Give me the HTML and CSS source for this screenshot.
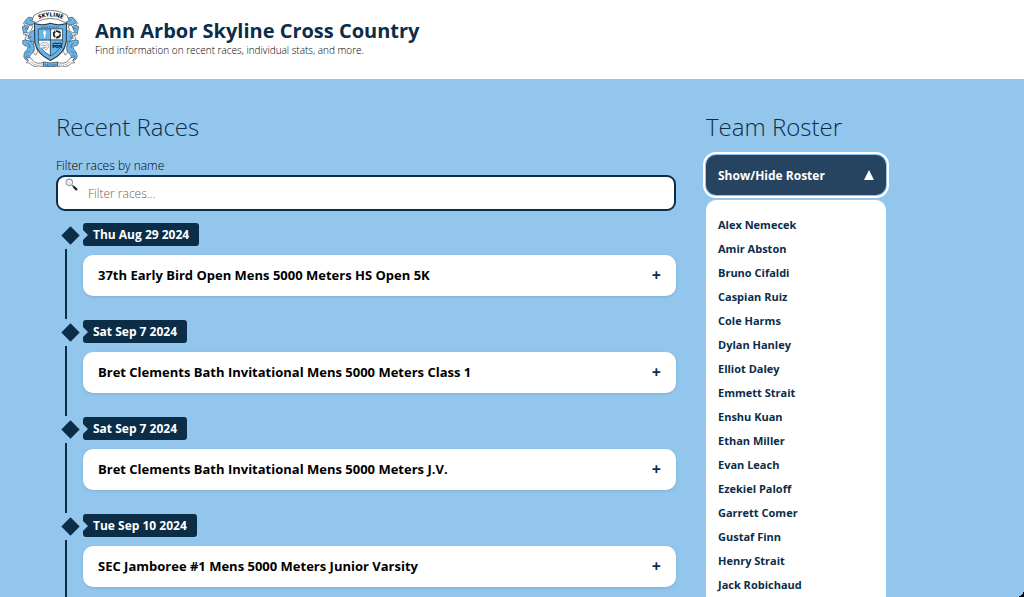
FILE: index.html
```html
<!DOCTYPE html>
<html lang="en">
<head>
    <meta charset="UTF-8">
    <meta name="viewport" content="width=device-width, initial-scale=1.0">
    <title>Ann Arbor Skyline Cross Country</title>
    <link rel="stylesheet" href="styles.css">
</head>
<body>
    <header>
        <svg class="logo" viewBox="4 4 160 160" role="img" aria-label="Skyline crest">
            <defs>
                <path id="bannerArc" d="M42 34 Q84 10 127 34"/>
                <!-- one supporter, mirrored for the other side -->
                <g id="supporter" stroke="#4b5a68" stroke-width="2" stroke-linejoin="round">
                    <path fill="#fff" d="M36 40 L24 42 L8 40 L13 50 L5 54 L12 62 L8 72 L17 76 L12 86 L22 92 L40 92 L40 46 Z"/>
                    <path fill="#66b5ec" d="M16 30 Q22 20 33 26 Q42 31 39 42 L31 46 L19 44 L11 37 Z"/>
                    <path fill="#66b5ec" d="M5 51 L17 46 L28 56 L20 68 L8 68 Z"/>
                    <path fill="#66b5ec" d="M27 67 L40 59 L40 94 L29 91 L21 80 Z"/>
                    <path fill="#fff" d="M25 46 L35 49 L30 61 L20 70 L17 64 Z"/>
                    <path fill="#66b5ec" d="M6 90 Q24 85 34 98 Q45 112 32 125 Q22 133 27 145 Q12 148 9 135 Q8 122 19 114 Q24 105 11 104 Q4 101 6 90 Z"/>
                    <path fill="#fff" d="M35 94 L42 99 L48 121 L42 131 L36 124 Q42 112 35 94 Z"/>
                    <path fill="none" d="M12 57 L20 54 M13 72 L24 77 M19 84 L31 79 M26 31 L29 35 M20 96 Q29 104 26 111 M16 126 L26 119 M14 135 L22 132"/>
                </g>
            </defs>
            <use href="#supporter"/>
            <use href="#supporter" transform="matrix(-1 0 0 1 168 0)"/>
            <!-- name banner -->
            <path fill="#fff" stroke="#4a5056" stroke-width="2" stroke-linejoin="round" d="M38 18 Q84 -9 130 18 L136 34 L125 39 Q84 16 43 39 L32 34 Z"/>
            <text class="logo-text"><textPath href="#bannerArc" startOffset="50%" text-anchor="middle">SKYLINE</textPath></text>
            <!-- shield -->
            <path fill="#66b5ec" stroke="#333b44" stroke-width="3" d="M39 42 Q62 49 84 41 Q106 49 129 42 L128 94 Q123 126 84 146 Q45 126 40 94 Z"/>
            <path fill="#fff" d="M86 58 H117 V87 H86 Z M51 90 H82 V130 Q54 115 51 94 Z"/>
            <path fill="none" stroke="#333b44" stroke-width="2" d="M50 57 H118 V94 Q113 117 84 133 Q55 117 50 94 Z M84 57 V133 M50 88 H118"/>
            <path fill="none" stroke="#40647f" stroke-width="3" stroke-dasharray="3 2" d="M59 52 H109"/>
            <!-- torch, ring, brain, book -->
            <path fill="#fff" stroke="#6c8aa3" d="M64 72 Q60 66 67 60 Q75 66 71 72 L69 84 H66 Z"/>
            <circle cx="102" cy="72" r="9" fill="none" stroke="#222" stroke-width="5" stroke-dasharray="14 5"/>
            <path fill="#222" d="M90 69 L96 61 L99 68 Z M110 62 L114 70 L106 68 Z M106 84 L97 83 L103 77 Z"/>
            <path fill="#f4f4f4" stroke="#8a9299" stroke-width="2" d="M53 108 Q50 101 57 99 Q60 92 67 96 Q76 93 79 101 Q83 108 75 112 L72 117 L67 112 H58 Z M58 104 Q64 99 67 105 Q72 99 76 104 M61 109 H73"/>
            <path fill="none" stroke="#20384d" stroke-width="3" d="M91 99 Q98 95 103 99 Q109 95 115 99 V109 Q109 105 103 110 Q97 105 91 109 Z M93 104 H113"/>
            <!-- bottom scroll -->
            <path fill="#fff" stroke="#4a5056" stroke-width="2" d="M17 139 Q29 134 33 145 Q44 158 66 151 V162 Q39 169 25 153 L16 152 L22 146 Z M151 139 Q139 134 135 145 Q124 158 102 151 V162 Q129 169 143 153 L152 152 L146 146 Z"/>
            <path fill="none" stroke="#4a5056" stroke-width="2" stroke-dasharray="3 2" d="M29 149 Q43 164 62 157 M139 149 Q125 164 106 157"/>
            <path fill="#66b5ec" stroke="#333b44" stroke-width="2" d="M64 150 Q84 155 104 150 V161 Q84 166 64 161 Z"/>
            <path fill="none" stroke="#20384d" stroke-width="2" stroke-dasharray="3 2" d="M69 157 Q84 160 100 157"/>
        </svg>
        <div>
            <h1>Ann Arbor Skyline Cross Country</h1>
            <p>Find information on recent races, individual stats, and more.</p>
        </div>
    </header>

    <main>
        <section class="races">
            <h2>Recent Races</h2>
            <label for="raceFilter">Filter races by name</label>
            <div class="search">
                <input type="text" id="raceFilter" placeholder="Filter races...">
                <svg class="search-icon" viewBox="0 0 24 24" aria-hidden="true">
                    <path stroke="#222" stroke-width="4" stroke-linecap="round" d="M16 16 L21 21"/>
                    <path stroke="#777" stroke-width="2" d="M13 13 L16 16"/>
                    <circle cx="8" cy="8" r="6" fill="#eaf1f6" stroke="#9a9da1" stroke-width="2"/>
                </svg>
            </div>

            <ol class="timeline">
                <li>
                    <time datetime="2024-08-29">Thu Aug 29 2024</time>
                    <details>
                        <summary>37th Early Bird Open Mens 5000 Meters HS Open 5K</summary>
                    </details>
                </li>
                <li>
                    <time datetime="2024-09-07">Sat Sep 7 2024</time>
                    <details>
                        <summary>Bret Clements Bath Invitational Mens 5000 Meters Class 1</summary>
                    </details>
                </li>
                <li>
                    <time datetime="2024-09-07">Sat Sep 7 2024</time>
                    <details>
                        <summary>Bret Clements Bath Invitational Mens 5000 Meters J.V.</summary>
                    </details>
                </li>
                <li>
                    <time datetime="2024-09-10">Tue Sep 10 2024</time>
                    <details>
                        <summary>SEC Jamboree #1 Mens 5000 Meters Junior Varsity</summary>
                    </details>
                </li>
            </ol>
        </section>

        <section class="roster">
            <h2>Team Roster</h2>
            <button type="button" id="rosterToggle" aria-expanded="true" aria-controls="rosterList">
                Show/Hide Roster
                <svg class="arrow" viewBox="0 0 10 10" aria-hidden="true"><path fill="#fff" d="M5 0 L10 10 H0 Z"/></svg>
            </button>
            <ul id="rosterList">
                <li><a href="#">Alex Nemecek</a></li>
                <li><a href="#">Amir Abston</a></li>
                <li><a href="#">Bruno Cifaldi</a></li>
                <li><a href="#">Caspian Ruiz</a></li>
                <li><a href="#">Cole Harms</a></li>
                <li><a href="#">Dylan Hanley</a></li>
                <li><a href="#">Elliot Daley</a></li>
                <li><a href="#">Emmett Strait</a></li>
                <li><a href="#">Enshu Kuan</a></li>
                <li><a href="#">Ethan Miller</a></li>
                <li><a href="#">Evan Leach</a></li>
                <li><a href="#">Ezekiel Paloff</a></li>
                <li><a href="#">Garrett Comer</a></li>
                <li><a href="#">Gustaf Finn</a></li>
                <li><a href="#">Henry Strait</a></li>
                <li><a href="#">Jack Robichaud</a></li>
            </ul>
        </section>
    </main>
    <div class="corner"></div>

    <script>
        const toggle = document.getElementById('rosterToggle');
        const roster = document.getElementById('rosterList');

        // Show or hide the roster
        toggle.addEventListener('click', () => {
            roster.hidden = !roster.hidden;
            toggle.setAttribute('aria-expanded', String(!roster.hidden));
        });

        // Filter races by name
        document.getElementById('raceFilter').addEventListener('input', e => {
            const term = e.target.value.toLowerCase();
            document.querySelectorAll('.timeline li').forEach(li => {
                li.hidden = !li.querySelector('summary').textContent.toLowerCase().includes(term);
            });
        });
    </script>
</body>
</html>
```

FILE: styles.css
```css
* {
    box-sizing: border-box;
}

html {
    scrollbar-width: none;
    background-color: #93c6ed;
}

body {
    margin: 0;
    font-family: "Open Sans", "Noto Sans", sans-serif;
    font-weight: 300;
    color: #0b2d48;
}

h1, h2, p, ul, ol {
    margin: 0;
    padding: 0;
}

ul, ol {
    list-style: none;
}

/* Header */
header {
    display: flex;
    gap: 16px;
    padding: 10px 22px 12px;
    background-color: #fff;
}

header div {
    padding-top: 8px;
}

.logo {
    width: 57px;
    height: 57px;
}

.logo-text {
    font-size: 16px;
    font-weight: 800;
    fill: #222;
}

h1 {
    font-size: 20px;
    line-height: 26px;
    font-weight: 700;
}

header p {
    font-size: 10px;
    line-height: 12px;
    color: #000;
}

/* Page columns */
main {
    display: grid;
    grid-template-columns: minmax(0, 1fr) 262px;
    gap: 30px;
    padding: 32px 56px 0;
}

h2 {
    font-size: 24px;
    line-height: 32px;
    font-weight: 300;
}

/* Race filter */
label {
    display: block;
    margin-top: 14px;
    font-size: 12px;
    line-height: 18px;
    color: #000;
}

.search {
    position: relative;
}

.search input {
    display: block;
    width: 100%;
    height: 36px;
    padding: 0 30px;
    border: 2px solid #0b2d48;
    border-radius: 9px;
    background-color: #fff;
    font: inherit;
    font-size: 12px;
}

.search input::placeholder {
    color: #666;
}

.search-icon {
    position: absolute;
    top: 3px;
    left: 9px;
    width: 13px;
    height: 13px;
    fill: none;
}

/* Timeline */
.timeline {
    margin-top: 12px;
}

.timeline li {
    position: relative;
    padding: 0 0 24px 27px;
}

/* diamond */
.timeline li::before {
    content: "";
    position: absolute;
    top: 6px;
    left: 8px;
    width: 13px;
    height: 13px;
    background-color: #0b2d48;
    transform: rotate(45deg);
}

/* connecting line */
.timeline li::after {
    content: "";
    position: absolute;
    top: 26px;
    bottom: 1px;
    left: 9px;
    width: 2px;
    background-color: #0b2d48;
}

time {
    position: relative;
    display: block;
    width: fit-content;
    padding: 0 10px;
    border-radius: 3px;
    background-color: #0b2d48;
    color: #fff;
    font-size: 12px;
    line-height: 23px;
    font-weight: 700;
}

/* notch */
time::before {
    content: "";
    position: absolute;
    top: 7px;
    left: 0;
    border: 5px solid transparent;
    border-left-color: #93c6ed;
    border-right-width: 0;
}

details {
    margin-top: 9px;
    border-radius: 10px;
    background-color: #fff;
    box-shadow: 0 1px 3px rgba(0, 0, 0, 0.12);
}

summary {
    display: flex;
    justify-content: space-between;
    align-items: center;
    padding: 0 15px;
    color: #000;
    font-size: 13px;
    line-height: 41px;
    font-weight: 700;
    cursor: pointer;
}

summary::after {
    content: "+";
    color: #0b2d48;
    font-size: 16px;
}

/* Roster */
.roster button {
    display: flex;
    justify-content: space-between;
    align-items: center;
    width: 180px;
    height: 40px;
    margin-top: 12px;
    padding: 0 12px;
    border: 0;
    border-radius: 10px;
    outline: 2px solid #fff;
    outline-offset: 1px;
    background-color: #26435f;
    color: #fff;
    font: inherit;
    font-size: 12px;
    font-weight: 700;
    cursor: pointer;
}

.arrow {
    width: 10px;
    height: 10px;
}

#rosterList {
    width: 180px;
    margin-top: 5px;
    padding: 12px;
    border-radius: 10px;
    background-color: #fff;
}

#rosterList a {
    color: #0b2d48;
    font-size: 11px;
    line-height: 24px;
    font-weight: 700;
    text-decoration: none;
}

#rosterList li {
    height: 24px;
}

[hidden] {
    display: none;
}

/* Rounded window corner */
.corner {
    position: fixed;
    right: 0;
    bottom: 0;
    width: 8px;
    height: 8px;
    background: radial-gradient(circle at 0 0, transparent 8px, #000 8px);
}
```
